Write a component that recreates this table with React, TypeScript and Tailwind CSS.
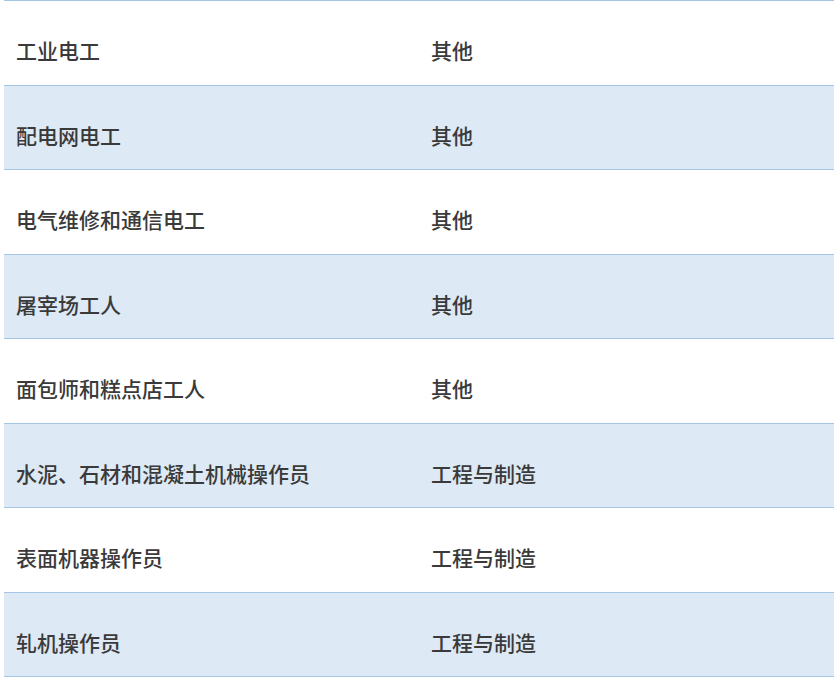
const rows: [string, string][] = [
  ["工业电工", "其他"],
  ["配电网电工", "其他"],
  ["电气维修和通信电工", "其他"],
  ["屠宰场工人", "其他"],
  ["面包师和糕点店工人", "其他"],
  ["水泥、石材和混凝土机械操作员", "工程与制造"],
  ["表面机器操作员", "工程与制造"],
  ["轧机操作员", "工程与制造"],
];

export default function App() {
  return (
    <div className="w-[836px] h-[680px] bg-white pl-[4px] pr-[2px] font-['Noto_Sans_CJK_SC',sans-serif]">
      <div className="border-t border-[#a6c6e6]">
        {rows.map(([job, group], i) => (
          <div
            key={job}
            className={`grid grid-cols-2 h-[84.5px] border-b border-[#a6c6e6] ${i % 2 === 1 ? "bg-[#dde9f5]" : "bg-white"}`}
          >
            <div className="pl-[12px] pt-[34px] text-[21px] leading-[30px] font-medium text-[#3a3a3a]">{job}</div>
            <div className="pl-[12px] pt-[34px] text-[21px] leading-[30px] font-medium text-[#3a3a3a]">{group}</div>
          </div>
        ))}
      </div>
    </div>
  );
}
